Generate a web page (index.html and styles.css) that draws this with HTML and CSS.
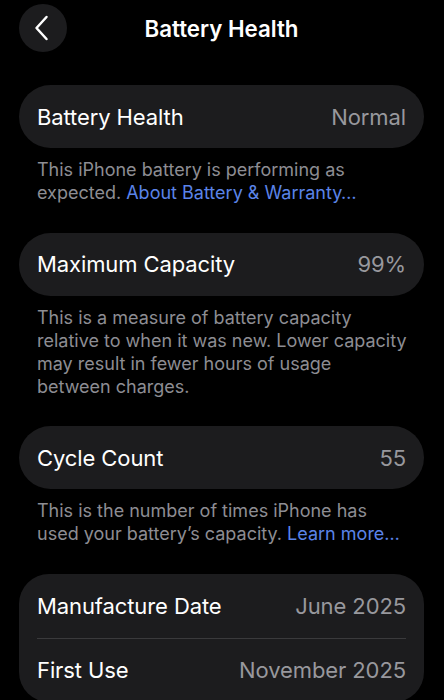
FILE: index.html
```html
<!DOCTYPE html>
<html lang="en">
<head>
<meta charset="utf-8">
<title>Battery Health</title>
<link rel="stylesheet" href="styles.css">
</head>
<body>
<div class="screen">
  <header class="nav">
    <button class="back" aria-label="Back">
      <svg width="18" height="26" viewBox="0 0 18 26"><path d="M13.5 2 L3.5 13 L13.5 24" fill="none" stroke="#fff" stroke-width="2.5" stroke-linecap="round" stroke-linejoin="round"/></svg>
    </button>
    <h1 class="title">Battery Health</h1>
    <span class="spacer"></span>
  </header>

  <section class="group">
    <div class="card pill">
      <div class="row"><span class="label">Battery Health</span><span class="value">Normal</span></div>
    </div>
    <p class="footer">This iPhone battery is performing as<br>expected. <a class="link">About Battery &amp; Warranty…</a></p>
  </section>

  <section class="group">
    <div class="card pill">
      <div class="row"><span class="label">Maximum Capacity</span><span class="value">99%</span></div>
    </div>
    <p class="footer">This is a measure of battery capacity<br>relative to when it was new. Lower capacity<br>may result in fewer hours of usage<br>between charges.</p>
  </section>

  <section class="group">
    <div class="card pill">
      <div class="row"><span class="label">Cycle Count</span><span class="value">55</span></div>
    </div>
    <p class="footer">This is the number of times iPhone has<br>used your battery’s capacity. <a class="link">Learn more…</a></p>
  </section>

  <section class="group">
    <div class="card list">
      <div class="row tall"><span class="label">Manufacture Date</span><span class="value">June 2025</span></div>
      <div class="row tall"><span class="label">First Use</span><span class="value">November 2025</span></div>
    </div>
  </section>
</div>
</body>
</html>
```
FILE: styles.css
```css
html, body {
  margin: 0;
  padding: 0;
  background: #000;
}
body {
  font-family: Inter, "Noto Sans", "Liberation Sans", sans-serif;
  color: #fff;
  overflow: hidden;
}
.screen {
  width: 444px;
  height: 700px;
  padding: 4px 20px 0 19px;
  box-sizing: border-box;
}
.nav {
  display: grid;
  grid-template-columns: 48px 1fr 48px;
  align-items: center;
  height: 48px;
}
.back {
  width: 48px;
  height: 48px;
  border-radius: 50%;
  background: #1c1c1e;
  border: none;
  padding: 0 2px 0 0;
  display: flex;
  align-items: center;
  justify-content: center;
}
.title {
  margin: 0;
  text-align: center;
  font-size: 22.3px;
  font-weight: 600;
}
.group {
  margin-top: 33px;
}
.group + .group {
  margin-top: 28.5px;
}
.card {
  background: #1c1c1e;
}
.pill {
  border-radius: 32px;
}
.list {
  border-radius: 30px;
}
.row {
  height: 63px;
  padding: 0 18px;
  display: flex;
  align-items: center;
  justify-content: space-between;
  font-size: 22px;
  letter-spacing: -0.1px;
}
.row.tall {
  height: 64px;
}
.list .row + .row {
  position: relative;
}
.list .row + .row::before {
  content: "";
  position: absolute;
  top: 0;
  left: 18px;
  right: 18px;
  height: 1px;
  background: #3a3a3c;
}
.label {
  color: #fff;
}
.value {
  color: #98989d;
}
.footer {
  margin: 0;
  padding: 10px 0 0 18px;
  font-size: 18px;
  line-height: 23px;
  color: #8d8d93;
  white-space: nowrap;
}
.link {
  color: #5b84e8;
}
```
